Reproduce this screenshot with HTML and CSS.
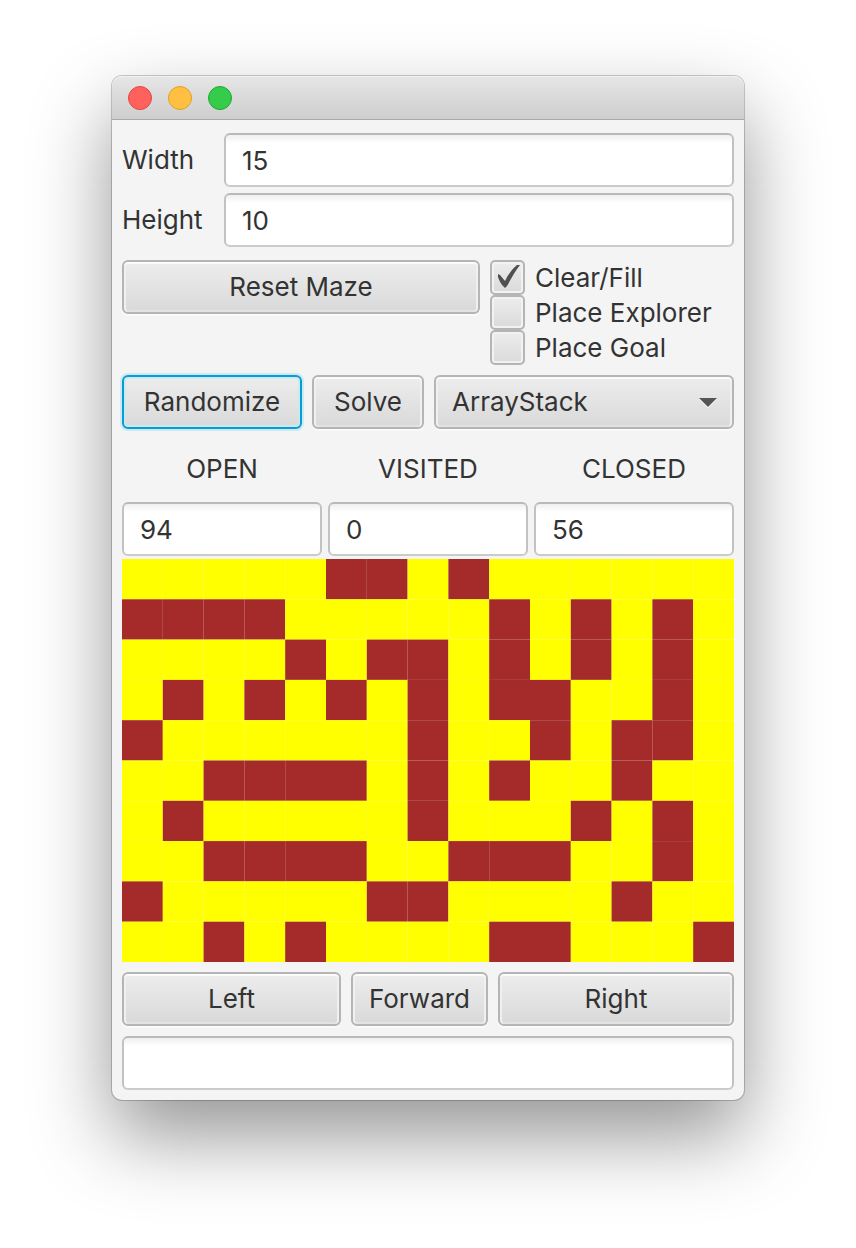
FILE: index.html
```html
<!DOCTYPE html>
<html lang="en">
<head>
<meta charset="utf-8">
<title>Maze</title>
<link rel="stylesheet" href="styles.css">
</head>
<body>
<main class="window">
  <header class="titlebar">
    <button class="light light-close" type="button" aria-label="Close"></button>
    <button class="light light-minimize" type="button" aria-label="Minimize"></button>
    <button class="light light-zoom" type="button" aria-label="Zoom"></button>
  </header>
  <div class="content">
    <div class="size-form">
      <label for="width">Width</label>
      <input class="field" id="width" type="text" value="15">
      <label for="height">Height</label>
      <input class="field" id="height" type="text" value="10">
    </div>
    <div class="reset-row">
      <button class="button reset" type="button">Reset Maze</button>
      <div class="options">
        <label class="option"><input class="check" type="checkbox" checked>Clear/Fill</label>
        <label class="option"><input class="check" type="checkbox">Place Explorer</label>
        <label class="option"><input class="check" type="checkbox">Place Goal</label>
      </div>
    </div>
    <div class="solve-row">
      <button class="button button-focused" type="button">Randomize</button>
      <button class="button" type="button">Solve</button>
      <div class="combo">
        <select class="button combo-select" aria-label="Agenda">
          <option>ArrayStack</option>
        </select>
        <svg class="combo-arrow" viewBox="0 0 18 10" aria-hidden="true"><path d="M0 1h18l-9 9z" fill="#fff"/><path d="M0 0h18l-9 9z" fill="#555"/></svg>
      </div>
    </div>
    <div class="counts">
      <div class="count"><label for="open">OPEN</label><input class="field" id="open" type="text" value="94"></div>
      <div class="count"><label for="visited">VISITED</label><input class="field" id="visited" type="text" value="0"></div>
      <div class="count"><label for="closed">CLOSED</label><input class="field" id="closed" type="text" value="56"></div>
    </div>
    <svg class="maze" id="maze" viewBox="0 0 15 10" preserveAspectRatio="none" role="img" aria-label="Maze"></svg>
    <div class="move-row">
      <button class="button" type="button">Left</button>
      <button class="button" type="button">Forward</button>
      <button class="button" type="button">Right</button>
    </div>
    <input class="field status" type="text" aria-label="Status">
  </div>
</main>
<script src="maze.js"></script>
</body>
</html>
```
FILE: styles.css
```css
* {
  box-sizing: border-box;
}

body {
  margin: 0;
  padding: 76px 112px 148px;
  background: #fff;
  color: #333;
  font: 26px/30px Inter, "Liberation Sans", sans-serif;
}

.window {
  border-radius: 10px;
  background: #f4f4f4;
  box-shadow: 0 0 0 1px rgba(0, 0, 0, 0.2), 0 36px 80px rgba(0, 0, 0, 0.42);
}

.titlebar {
  display: flex;
  align-items: center;
  gap: 16px;
  height: 44px;
  padding: 0 16px;
  border-bottom: 1px solid #a9a9a9;
  border-radius: 10px 10px 0 0;
  background: linear-gradient(#e6e6e6, #cecece);
  box-shadow: inset 0 1px #f2f2f2;
}

.light {
  width: 24px;
  height: 24px;
  padding: 0;
  border: 1px solid;
  border-radius: 50%;
}

.light-close {
  border-color: #e2463f;
  background: #ff625c;
}

.light-minimize {
  border-color: #dfa023;
  background: #ffbf41;
}

.light-zoom {
  border-color: #1fa833;
  background: #35cb4b;
}

.content {
  padding: 13px 10px 10px;
}

.field,
.button {
  height: 54px;
  border: 2px solid #b5b5b5;
  border-radius: 6px;
  color: #333;
  font: inherit;
}

.field {
  display: block;
  width: 100%;
  min-width: 0;
  padding: 0 16px;
  border-color: #b9b9b9 #c2c2c2 #cbcbcb;
  background: linear-gradient(#efefef, #fff 8px);
}

.button {
  padding: 0 16px;
  background: linear-gradient(#ededed, #d9d9d9);
  box-shadow: 0 2px #fafafa, inset 0 2px #fbfbfb, inset 2px 0 #f0f0f0, inset -2px 0 #f0f0f0, inset 0 -2px #e2e2e2;
}

.button-focused {
  padding: 0;
  border-color: #039ed3;
  box-shadow: 0 0 0 2px #d0e8f1, inset 0 0 0 2px rgba(200, 232, 243, 0.8);
}

.size-form {
  display: grid;
  grid-template-columns: 102px 1fr;
  align-items: center;
  row-gap: 6px;
}

.reset-row {
  display: flex;
  align-items: flex-start;
  gap: 10px;
  margin-top: 13px;
}

.reset {
  flex: 1;
}

.options {
  width: 244px;
}

.option {
  display: flex;
  align-items: center;
  gap: 10px;
  height: 35px;
}

.check {
  width: 35px;
  height: 35px;
  margin: 0;
  border: 2px solid #b5b5b5;
  border-radius: 5px;
  appearance: none;
  background: linear-gradient(#ededed, #dadada);
  box-shadow: inset 0 0 0 2px #f2f2f2;
}

.check:checked::before {
  content: "";
  display: block;
  width: 24px;
  height: 24px;
  margin: 2px 0 0 5px;
  background: #505050;
  clip-path: path("M1 10L3 11L8 17C11 11 15 5 20 1L23 1C18 7 14 15 10 22L8 24L6 22C4 20 2 16 1 13Z");
}

.solve-row {
  display: grid;
  grid-template-columns: 180px 112px 1fr;
  gap: 10px;
  margin-top: 10px;
}

.combo {
  position: relative;
}

.combo-select {
  display: block;
  width: 100%;
  appearance: none;
}

.combo-arrow {
  position: absolute;
  top: 23px;
  right: 17px;
  width: 18px;
  height: 10px;
  pointer-events: none;
}

.counts {
  display: grid;
  grid-template-columns: repeat(3, 1fr);
  gap: 6px;
  margin-top: 25px;
}

.count {
  display: grid;
  gap: 18px;
  text-align: center;
}

.maze {
  display: block;
  width: 100%;
  aspect-ratio: 612 / 403;
  margin-top: 3px;
}

.open-cell {
  fill: #ff0;
}

.wall-cell {
  fill: #a52a2a;
}

.move-row {
  display: grid;
  grid-template-columns: 219fr 137fr 236fr;
  gap: 10px;
  margin-top: 10px;
}

.move-row .button {
  min-width: 0;
  padding: 0;
}

.status {
  margin-top: 10px;
}
```
FILE: maze.js
```js
const rows = [
  ".....##.#......",
  "####.....#.#.#.",
  "....#.##.#.#.#.",
  ".#.#.#.#.##..#.",
  "#......#..#.##.",
  "..####.#.#..#..",
  ".#.....#...#.#.",
  "..####..###..#.",
  "#.....##....#..",
  "..#.#....##...#"
];

const maze = document.getElementById("maze");

rows.forEach((row, y) => {
  [...row].forEach((cell, x) => {
    const rect = document.createElementNS("http://www.w3.org/2000/svg", "rect");
    rect.setAttribute("x", x);
    rect.setAttribute("y", y);
    rect.setAttribute("width", 1);
    rect.setAttribute("height", 1);
    rect.setAttribute("class", cell === "#" ? "wall-cell" : "open-cell");
    maze.append(rect);
  });
});
```
